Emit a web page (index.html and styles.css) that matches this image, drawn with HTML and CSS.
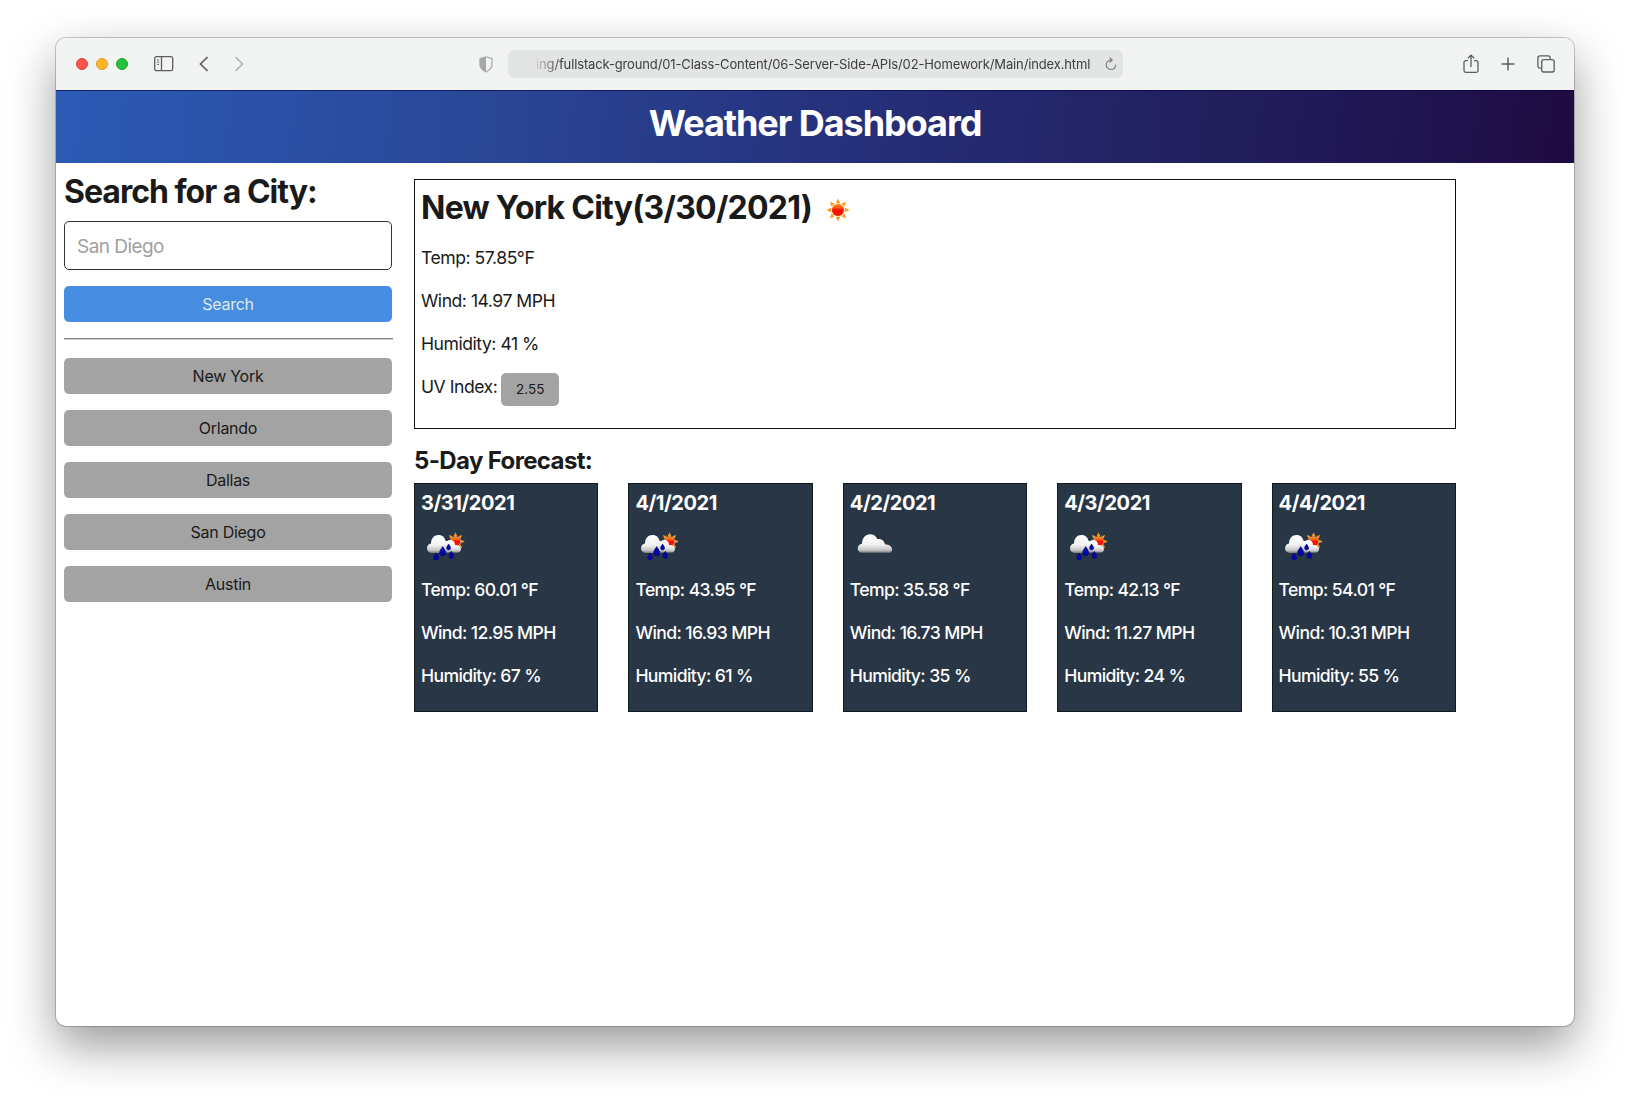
FILE: index.html
```html
<!DOCTYPE html>
<html lang="en">
<head>
<meta charset="utf-8">
<title>Weather Dashboard</title>
<link rel="stylesheet" href="styles.css">
</head>
<body>
<svg class="defs" width="0" height="0" aria-hidden="true">
  <defs>
    <linearGradient id="cloudFill" x1="0" y1="0" x2="0" y2="1">
      <stop offset="0" stop-color="#fff"/><stop offset=".55" stop-color="#f2f2f2"/><stop offset=".85" stop-color="#c4c4c4"/><stop offset="1" stop-color="#777"/>
    </linearGradient>
    <linearGradient id="sunFill" x1="0" y1="0" x2="0" y2="1">
      <stop offset="0" stop-color="#ff8a1c"/><stop offset=".3" stop-color="#ff5a10"/><stop offset=".5" stop-color="#fb0d05"/><stop offset="1" stop-color="#ff1500"/>
    </linearGradient>
    <g id="sun">
      <path fill="#fb9a26" d="M0-11.6 2.2-7H-2.2ZM0 11.6 2.2 7H-2.2ZM-11.6 0-7-2.2V2.2ZM11.6 0 7-2.2V2.2ZM-8.2-8.2-3.4-6.5-6.5-3.4ZM8.2-8.2 3.4-6.5 6.5-3.4ZM-8.2 8.2-3.4 6.5-6.5 3.4ZM8.2 8.2 3.4 6.5 6.5 3.4Z"/>
      <circle r="6.7" fill="#ffd08a"/><circle r="6" fill="url(#sunFill)"/>
    </g>
    <symbol id="rain" viewBox="0 0 50 50">
      <use href="#sun" transform="translate(34.5 19.5) scale(.8)"/>
      <path fill="url(#cloudFill)" d="M24 30.500a3.500 3.500 0 0 1 0-5c0-4 2-7.500 5.500-7.500 3 0 4.500 2.500 4.500 5 3.500 0 6 1.500 6 4 0 2-1.500 3.800-4 3.800Z"/>
      <path fill="url(#cloudFill)" d="M10.500 31C8 31 6 29 6 26.300c0-2.600 1.800-4.300 4-4.800C10.200 16 13.200 13 17.500 13c4 0 6.200 2.400 6.800 5.500C27 19 28 21.500 27.500 24c.8 4-.5 7-3 7Z"/>
      <g fill="#0508a8" stroke="#03056a" stroke-width=".5">
        <path d="M21.700 24.500c2 3.200 3.100 4.300 3.100 6.200a3.100 3.100 0 0 1-6.200 0c0-1.900 1.100-3 3.100-6.200Z"/>
        <path d="M27.600 22c1.200 2 2 2.700 2 4a2 2 0 0 1-4 0c0-1.300.8-2 2-4Z"/>
        <path d="M15.200 31c1.500 2.400 2.400 3.200 2.400 4.700a2.400 2.400 0 0 1-4.800 0c0-1.500.9-2.300 2.400-4.700Z"/>
        <path d="M30.300 29.300c1.500 2.400 2.400 3.200 2.400 4.700a2.400 2.400 0 0 1-4.800 0c0-1.500.9-2.300 2.400-4.700Z"/>
      </g>
    </symbol>
    <symbol id="cloud" viewBox="0 0 50 50">
      <path fill="url(#cloudFill)" d="M12 30.800C9.500 30.800 7.700 29 7.700 26.500c0-2.600 1.900-4.300 4.200-4.700C12.200 15.700 15.500 12.200 20 12.200c3.800 0 6 2 7.200 4.800 3.500-.6 7 1 7.700 5.200 4 .2 7.200 2.200 7.200 5.200 0 2-1.200 3.400-3.600 3.400Z"/>
    </symbol>
  </defs>
</svg>

<div class="window">
  <div class="toolbar">
    <div class="lights"><i class="light light-red"></i><i class="light light-yellow"></i><i class="light light-green"></i></div>
    <svg class="ico ico-side" width="20" height="16" viewBox="0 0 20 16" fill="none" stroke="#5c5e5e"><rect x=".7" y=".7" width="18" height="14" rx="1.800" stroke-width="1.300"/><path stroke-width="1.300" d="M7.500.7v14"/><path d="M2.800 4h2.400M2.800 6.200h2.400M2.800 8.400h2.400" stroke-width=".9"/></svg>
    <svg class="ico ico-back" width="10" height="16" viewBox="0 0 10 16" fill="none" stroke="#5c5e5e" stroke-width="1.700"><path d="M8.500 1 1.500 8l7 7"/></svg>
    <svg class="ico ico-fwd" width="10" height="16" viewBox="0 0 10 16" fill="none" stroke="#b1b3b3" stroke-width="1.700"><path d="m1.500 1 7 7-7 7"/></svg>
    <svg class="ico ico-shield" width="14" height="17" viewBox="0 0 14 17"><path d="M7 .8 13 2.600v6.200c0 3.300-2.700 5.500-6 7.200-3.300-1.700-6-3.900-6-7.200V2.600Z" fill="none" stroke="#a6a8a8" stroke-width="1.200"/><path fill="#a6a8a8" d="M7 .8V16C3.700 14.300 1 12.100 1 8.800V2.600Z"/></svg>
    <div class="address">
      <span class="url">ing/fullstack-ground/01-Class-Content/06-Server-Side-APIs/02-Homework/Main/index.html</span>
      <svg class="ico ico-reload" width="12" height="14" viewBox="0 0 12 14" fill="none" stroke="#7b7d7d" stroke-width="1.100"><path d="M6.500 3A4.800 4.800 0 1 0 10.800 7.800M4.500.6 7.200 3 4.500 5.600"/></svg>
    </div>
    <svg class="ico ico-share" width="16" height="20" viewBox="0 0 16 20" fill="none" stroke="#5c5e5e" stroke-width="1.300"><path d="M5 6.600H2.800A1.800 1.800 0 0 0 1 8.400v8.200a1.800 1.800 0 0 0 1.800 1.800h10.400a1.800 1.800 0 0 0 1.800-1.800V8.400a1.800 1.800 0 0 0-1.800-1.800H11M8 13V1.300M4.800 4.300 8 1.100l3.200 3.200"/></svg>
    <svg class="ico ico-plus" width="14" height="14" viewBox="0 0 14 14" fill="none" stroke="#5c5e5e" stroke-width="1.500"><path d="M7 .5v13M.5 7h13"/></svg>
    <svg class="ico ico-tabs" width="18" height="18" viewBox="0 0 18 18" fill="none" stroke="#5c5e5e" stroke-width="1.300"><rect x="4.700" y="4.700" width="12.500" height="12.300" rx="2"/><path d="M4.700 13.100H2.900a2 2 0 0 1-2-2V2.900a2 2 0 0 1 2-2h8.200a2 2 0 0 1 2 2v1.800"/></svg>
  </div>

  <header class="banner"><h1 class="banner-title">Weather Dashboard</h1></header>

  <div class="page">
    <aside class="sidebar">
      <h2 class="sidebar-title">Search for a City:</h2>
      <div class="field">San Diego</div>
      <button class="btn btn-search">Search</button>
      <div class="rule"></div>
      <div class="history">
        <button class="btn">New York</button>
        <button class="btn">Orlando</button>
        <button class="btn">Dallas</button>
        <button class="btn">San Diego</button>
        <button class="btn">Austin</button>
      </div>
    </aside>

    <main class="main">
      <section class="today">
        <h2 class="today-title">New York City(3/30/2021)<svg class="today-icon" width="24" height="24" viewBox="-12 -12 24 24"><use href="#sun"/></svg></h2>
        <p class="stat">Temp: 57.85°F</p>
        <p class="stat">Wind: 14.97 MPH</p>
        <p class="stat">Humidity: 41 %</p>
        <p class="stat">UV Index:<b class="uv">2.55</b></p>
      </section>
      <h3 class="forecast-title">5-Day Forecast:</h3>
      <section class="forecast">
        <article class="card"><h4 class="card-date">3/31/2021</h4><svg class="card-icon"><use href="#rain"/></svg><p class="stat">Temp: 60.01 °F</p><p class="stat">Wind: 12.95 MPH</p><p class="stat">Humidity: 67 %</p></article>
        <article class="card"><h4 class="card-date">4/1/2021</h4><svg class="card-icon"><use href="#rain"/></svg><p class="stat">Temp: 43.95 °F</p><p class="stat">Wind: 16.93 MPH</p><p class="stat">Humidity: 61 %</p></article>
        <article class="card"><h4 class="card-date">4/2/2021</h4><svg class="card-icon"><use href="#cloud"/></svg><p class="stat">Temp: 35.58 °F</p><p class="stat">Wind: 16.73 MPH</p><p class="stat">Humidity: 35 %</p></article>
        <article class="card"><h4 class="card-date">4/3/2021</h4><svg class="card-icon"><use href="#rain"/></svg><p class="stat">Temp: 42.13 °F</p><p class="stat">Wind: 11.27 MPH</p><p class="stat">Humidity: 24 %</p></article>
        <article class="card"><h4 class="card-date">4/4/2021</h4><svg class="card-icon"><use href="#rain"/></svg><p class="stat">Temp: 54.01 °F</p><p class="stat">Wind: 10.31 MPH</p><p class="stat">Humidity: 55 %</p></article>
      </section>
    </main>
  </div>
</div>
</body>
</html>
```
FILE: styles.css
```css
* { box-sizing: border-box; margin: 0; padding: 0; }
body {
  height: 1100px;
  padding: 38px 56px 74px;
  overflow: hidden;
  background: #fff;
  color: #1a1a1a;
  font-family: Inter, "Liberation Sans", sans-serif;
}
.defs { position: absolute; }
.window {
  height: 988px;
  overflow: hidden;
  border-radius: 10px;
  background: #fff;
  box-shadow: 0 0 0 1px rgba(0, 0, 0, .2), 0 20px 48px rgba(0, 0, 0, .4);
}
.toolbar { display: flex; align-items: center; height: 52px; padding: 0 19px 0 20px; background: #f2f4f3; }
.ico { flex: none; display: block; }
.lights { display: flex; gap: 8px; }
.light { width: 12px; height: 12px; border-radius: 50%; border: 1px solid; }
.light-red { background: #ff5550; border-color: #e2413e; }
.light-yellow { background: #ffb52b; border-color: #df9a1e; }
.light-green { background: #26c138; border-color: #1ba62c; }
.ico-side { margin-left: 26px; }
.ico-back { margin-left: 25px; }
.ico-fwd { margin-left: 25px; }
.ico-shield { margin-left: 235px; }
.address {
  display: flex; align-items: center; justify-content: space-between;
  width: 615px; height: 28px; margin-left: 15px; padding: 0 6px 0 28px;
  border-radius: 6px; background: #e3e5e4;
}
.url {
  white-space: nowrap; font-size: 13px; letter-spacing: -.14px; color: #3e4040;
  -webkit-mask-image: linear-gradient(to right, rgba(0,0,0,.15), #000 26px);
  mask-image: linear-gradient(to right, rgba(0,0,0,.15), #000 26px);
}
.ico-share { margin-left: auto; }
.ico-plus { margin-left: 22px; }
.ico-tabs { margin-left: 22px; }

.banner {
  height: 73px; padding-top: 10px; text-align: center; color: #fff;
  border-top: 1px solid rgba(0, 0, 50, .55);
  background: linear-gradient(97deg, #2c5ab6 0%, #2a4797 28%, #26307b 52%, #22205f 74%, #1f1450 90%, #1f0a40 100%) border-box;
}
.banner-title { font-size: 36px; line-height: 44px; font-weight: 700; letter-spacing: -1.05px; }

.page { display: flex; gap: 22px; padding: 8px 118px 0 8px; }
.sidebar { width: 328px; }
.sidebar-title { padding-top: 1px; font-size: 32px; line-height: 40px; margin-bottom: 9px; letter-spacing: -1px; white-space: nowrap; }
.field {
  height: 49px; padding: 0 12px; line-height: 50px;
  border: 1px solid #333; border-radius: 5px; font-size: 19px; letter-spacing: -.55px; color: #a0a0a0;
}
.btn {
  display: block; width: 328px; height: 36px; border: 0; border-radius: 5px;
  background: #a3a3a3; color: #1a1a1a; font: 16px/36px Inter, "Liberation Sans", sans-serif; letter-spacing: -.27px;
}
.btn-search { margin-top: 16px; background: #468de1; color: #dcebe6; }
.rule { width: 329px; height: 2px; margin: 16px 0 18px; border-top: 1px solid #858585; border-bottom: 1px solid #ccc; }
.history { display: grid; gap: 16px; }

.main { width: 1042px; padding-top: 8px; }
.today { height: 250px; padding: 9px 6px; border: 1px solid #111; }
.today-title { display: flex; font-size: 32px; line-height: 38px; margin-bottom: 17px; letter-spacing: -.75px; white-space: nowrap; }
.today-icon { margin: 9px 0 0 14px; }
.stat { display: flex; height: 27px; margin-bottom: 16px; font-size: 17.600px; line-height: 27px; letter-spacing: -.48px; white-space: nowrap; }
.uv {
  width: 58px; height: 33px; margin: 0 0 0 4px; border-radius: 5px; letter-spacing: 0;
  background: #a3a3a3; font-size: 13.500px; font-weight: 400; line-height: 33px; text-align: center;
}
.forecast-title { margin: 17px 0 8px; font-size: 24px; line-height: 29px; letter-spacing: -.63px; }
.forecast { display: grid; grid-template-columns: repeat(5, 1fr); gap: 30px; }
.card { height: 229px; padding: 7px 6px; border: 1px solid #111a1c; background: #293645; color: #fff; }
.card .stat { font-weight: 500; letter-spacing: -.62px; }
.card-date { font-size: 20px; line-height: 24px; letter-spacing: -.43px; }
.card-icon { display: block; width: 50px; height: 50px; margin: 7px 0 4px; }
```
